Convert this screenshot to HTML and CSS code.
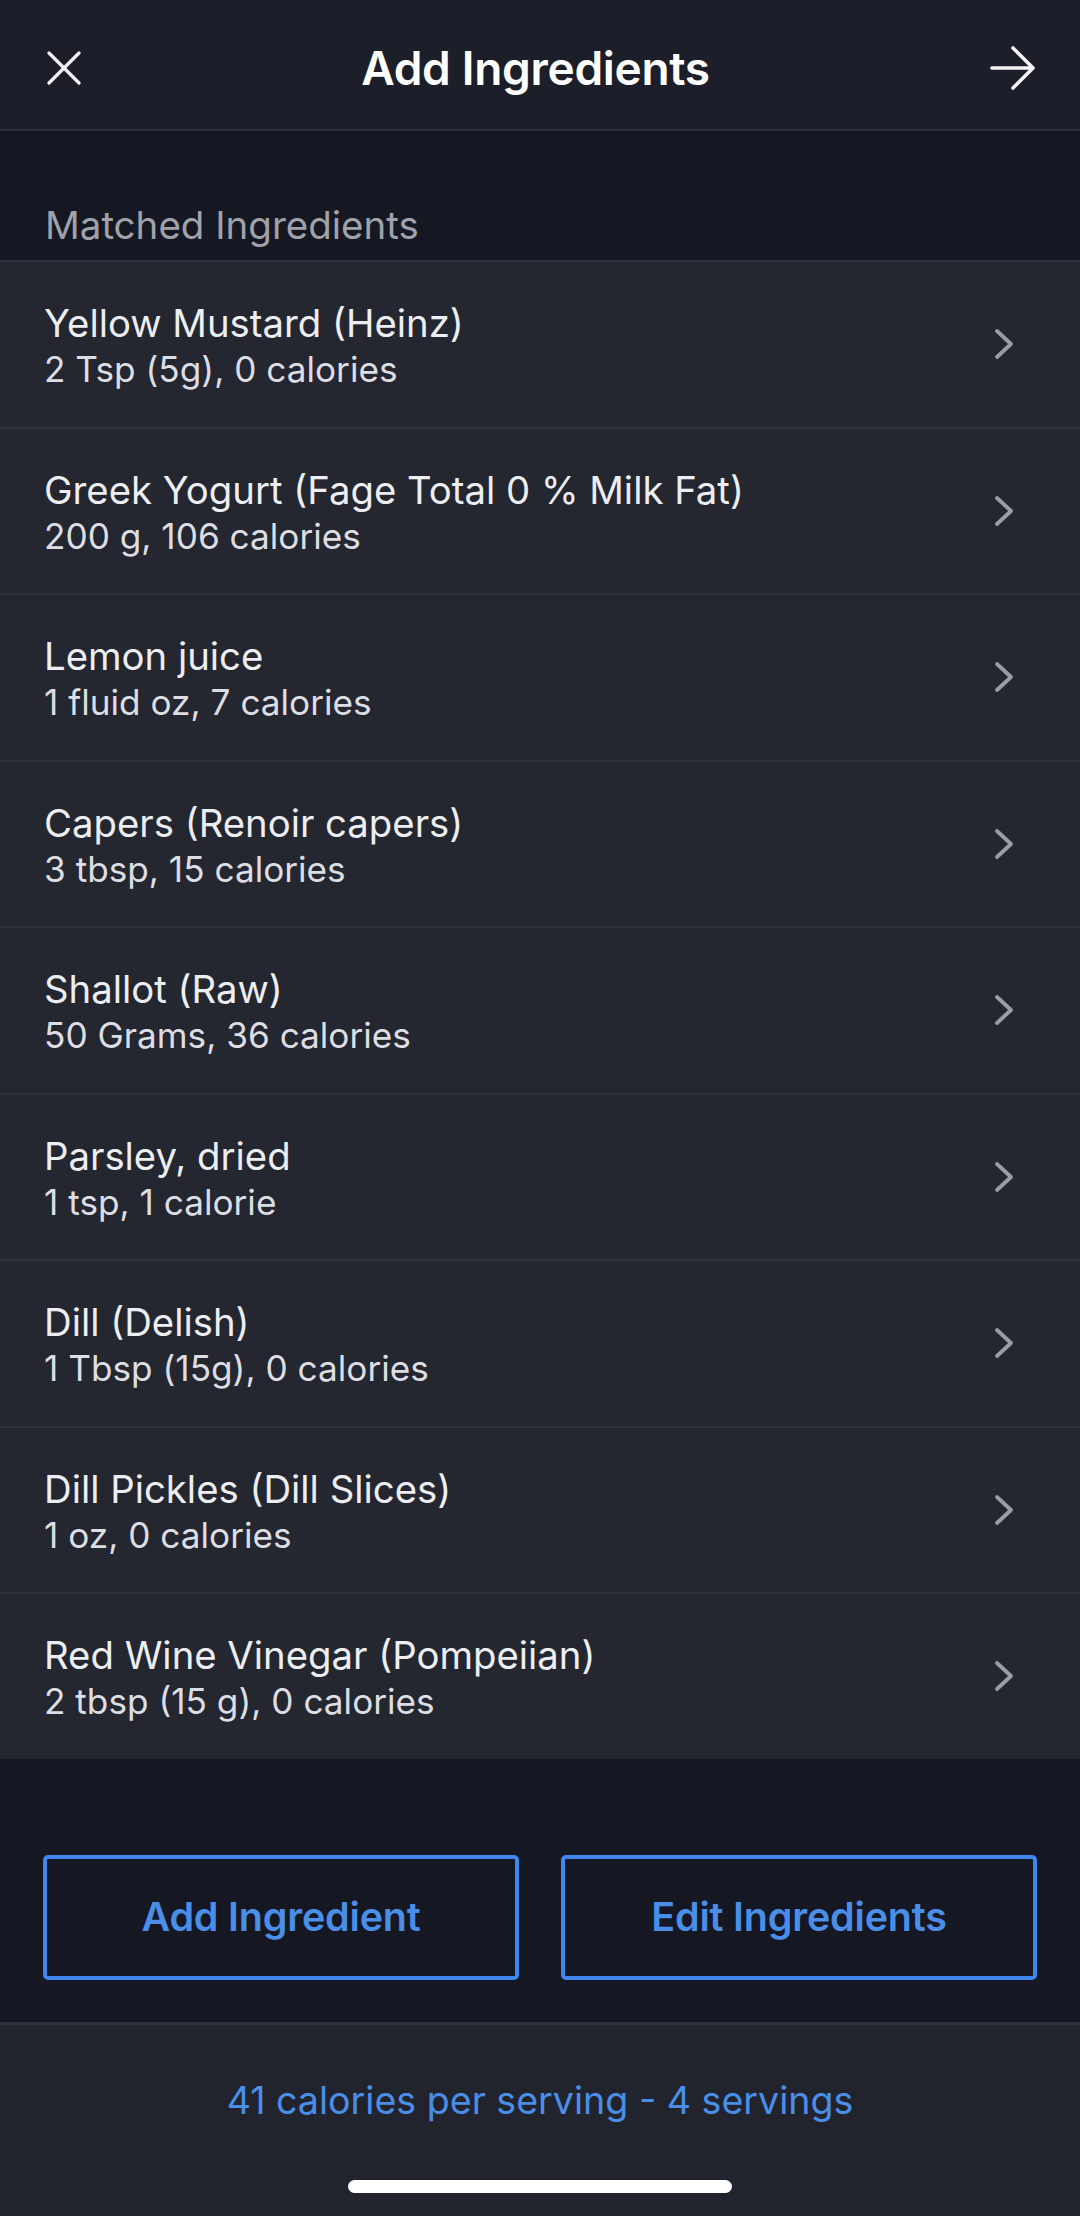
FILE: index.html
```html
<!DOCTYPE html>
<html lang="en">
<head>
    <meta charset="UTF-8">
    <meta name="viewport" content="width=device-width, initial-scale=1.0">
    <title>Add Ingredients</title>
    <link rel="stylesheet" href="styles.css">
</head>
<body>
    <div class="screen">
        <header class="topbar">
            <button class="icon-button" aria-label="Close">
                <svg class="icon-close" viewBox="0 0 34 34" fill="none" xmlns="http://www.w3.org/2000/svg">
                    <path d="M2 2L32 32M32 2L2 32" stroke="currentColor" stroke-width="3.2" stroke-linecap="round"/>
                </svg>
            </button>
            <h1 class="topbar-title">Add Ingredients</h1>
            <button class="icon-button" aria-label="Next">
                <svg class="icon-arrow" viewBox="0 0 46 44" fill="none" xmlns="http://www.w3.org/2000/svg">
                    <path d="M2 22H43M23 2L43 22L23 42" stroke="currentColor" stroke-width="3.6" stroke-linecap="round" stroke-linejoin="round"/>
                </svg>
            </button>
        </header>

        <div class="section-label">Matched Ingredients</div>

        <ul class="ingredient-list">
            <li class="ingredient-row">
                <div class="ingredient-text">
                    <span class="ingredient-name">Yellow Mustard (Heinz)</span>
                    <span class="ingredient-meta">2 Tsp (5g), 0 calories</span>
                </div>
                <svg class="chevron" viewBox="0 0 20 32" fill="none"><path d="M3 3L17 16L3 29" stroke="currentColor" stroke-width="3.8" stroke-linecap="round" stroke-linejoin="round"/></svg>
            </li>
            <li class="ingredient-row">
                <div class="ingredient-text">
                    <span class="ingredient-name">Greek Yogurt (Fage Total 0 % Milk Fat)</span>
                    <span class="ingredient-meta">200 g, 106 calories</span>
                </div>
                <svg class="chevron" viewBox="0 0 20 32" fill="none"><path d="M3 3L17 16L3 29" stroke="currentColor" stroke-width="3.8" stroke-linecap="round" stroke-linejoin="round"/></svg>
            </li>
            <li class="ingredient-row">
                <div class="ingredient-text">
                    <span class="ingredient-name">Lemon juice</span>
                    <span class="ingredient-meta">1 fluid oz, 7 calories</span>
                </div>
                <svg class="chevron" viewBox="0 0 20 32" fill="none"><path d="M3 3L17 16L3 29" stroke="currentColor" stroke-width="3.8" stroke-linecap="round" stroke-linejoin="round"/></svg>
            </li>
            <li class="ingredient-row">
                <div class="ingredient-text">
                    <span class="ingredient-name">Capers (Renoir capers)</span>
                    <span class="ingredient-meta">3 tbsp, 15 calories</span>
                </div>
                <svg class="chevron" viewBox="0 0 20 32" fill="none"><path d="M3 3L17 16L3 29" stroke="currentColor" stroke-width="3.8" stroke-linecap="round" stroke-linejoin="round"/></svg>
            </li>
            <li class="ingredient-row">
                <div class="ingredient-text">
                    <span class="ingredient-name">Shallot (Raw)</span>
                    <span class="ingredient-meta">50 Grams, 36 calories</span>
                </div>
                <svg class="chevron" viewBox="0 0 20 32" fill="none"><path d="M3 3L17 16L3 29" stroke="currentColor" stroke-width="3.8" stroke-linecap="round" stroke-linejoin="round"/></svg>
            </li>
            <li class="ingredient-row">
                <div class="ingredient-text">
                    <span class="ingredient-name">Parsley, dried</span>
                    <span class="ingredient-meta">1 tsp, 1 calorie</span>
                </div>
                <svg class="chevron" viewBox="0 0 20 32" fill="none"><path d="M3 3L17 16L3 29" stroke="currentColor" stroke-width="3.8" stroke-linecap="round" stroke-linejoin="round"/></svg>
            </li>
            <li class="ingredient-row">
                <div class="ingredient-text">
                    <span class="ingredient-name">Dill (Delish)</span>
                    <span class="ingredient-meta">1 Tbsp (15g), 0 calories</span>
                </div>
                <svg class="chevron" viewBox="0 0 20 32" fill="none"><path d="M3 3L17 16L3 29" stroke="currentColor" stroke-width="3.8" stroke-linecap="round" stroke-linejoin="round"/></svg>
            </li>
            <li class="ingredient-row">
                <div class="ingredient-text">
                    <span class="ingredient-name">Dill Pickles (Dill Slices)</span>
                    <span class="ingredient-meta">1 oz, 0 calories</span>
                </div>
                <svg class="chevron" viewBox="0 0 20 32" fill="none"><path d="M3 3L17 16L3 29" stroke="currentColor" stroke-width="3.8" stroke-linecap="round" stroke-linejoin="round"/></svg>
            </li>
            <li class="ingredient-row">
                <div class="ingredient-text">
                    <span class="ingredient-name">Red Wine Vinegar (Pompeiian)</span>
                    <span class="ingredient-meta">2 tbsp (15 g), 0 calories</span>
                </div>
                <svg class="chevron" viewBox="0 0 20 32" fill="none"><path d="M3 3L17 16L3 29" stroke="currentColor" stroke-width="3.8" stroke-linecap="round" stroke-linejoin="round"/></svg>
            </li>
        </ul>

        <div class="actions">
            <a href="#" class="button-outline">Add Ingredient</a>
            <a href="#" class="button-outline">Edit Ingredients</a>
        </div>

        <footer class="summary">
            <p class="summary-text">41 calories per serving - 4 servings</p>
            <div class="home-indicator"></div>
        </footer>
    </div>
</body>
</html>
```

FILE: styles.css
```css
:root {
    --bar: #1c1e29;
    --page: #151722;
    --row: #242630;
    --line: #2e303b;
    --text: #eceef2;
    --muted: #a0a2aa;
    --chevron: #9b9da5;
    --blue: #3f86ee;
    --blue-text: #4a8ee8;
}

* {
    box-sizing: border-box;
}

body {
    margin: 0;
    padding: 0;
    background-color: var(--page);
    color: var(--text);
    font-family: Inter, "Noto Sans", "Liberation Sans", sans-serif;
}

.screen {
    display: flex;
    flex-direction: column;
    width: 1080px;
    height: 2216px;
    background-color: var(--page);
}

/* Top navigation bar */
.topbar {
    display: flex;
    align-items: center;
    justify-content: space-between;
    height: 131px;
    padding: 6px 44px 0 44px;
    background-color: var(--bar);
    border-bottom: 2px solid var(--line);
}

.topbar-title {
    margin: 0;
    font-size: 46px;
    font-weight: 600;
    color: #ffffff;
    letter-spacing: -0.3px;
}

.icon-button {
    display: flex;
    align-items: center;
    justify-content: center;
    padding: 0;
    border: none;
    background: none;
    color: #f2f3f6;
}

.icon-close {
    width: 34px;
    height: 34px;
    margin-left: 3px;
}

.icon-arrow {
    width: 46px;
    height: 44px;
}

.section-label {
    height: 129px;
    padding: 0 45px 12px;
    display: flex;
    align-items: flex-end;
    font-size: 38.5px;
    color: var(--muted);
}

/* Ingredient rows */
.ingredient-list {
    list-style: none;
    margin: 0;
    padding: 0;
    background-color: var(--row);
}

.ingredient-row {
    display: flex;
    align-items: center;
    justify-content: space-between;
    height: 166.5px;
    padding: 0 66px 0 44px;
    border-top: 2px solid var(--line);
}

.ingredient-text {
    display: flex;
    flex-direction: column;
    gap: 2px;
    margin-top: 2px;
}

.ingredient-name {
    font-size: 38.3px;
    color: var(--text);
}

.ingredient-meta {
    font-size: 35.2px;
    color: #dcdee3;
}

.chevron {
    width: 20px;
    height: 32px;
    color: var(--chevron);
}

/* Buttons */
.actions {
    display: flex;
    gap: 42px;
    padding: 96px 43px 0;
    height: 263px;
    flex-shrink: 0;
}

.button-outline {
    flex: 1;
    display: flex;
    align-items: center;
    justify-content: center;
    height: 125px;
    border: 4px solid var(--blue);
    border-radius: 5px;
    color: var(--blue-text);
    font-size: 39.5px;
    font-weight: 600;
    text-decoration: none;
    letter-spacing: -0.2px;
}

/* Bottom summary */
.summary {
    flex: 1;
    display: flex;
    flex-direction: column;
    align-items: center;
    background-color: #22242d;
    border-top: 3px solid #2f313b;
}

.summary-text {
    margin: 53px 0 0;
    font-size: 37.6px;
    color: var(--blue-text);
}

.home-indicator {
    width: 384px;
    height: 13px;
    margin-top: 57px;
    border-radius: 7px;
    background-color: #ffffff;
}
```
